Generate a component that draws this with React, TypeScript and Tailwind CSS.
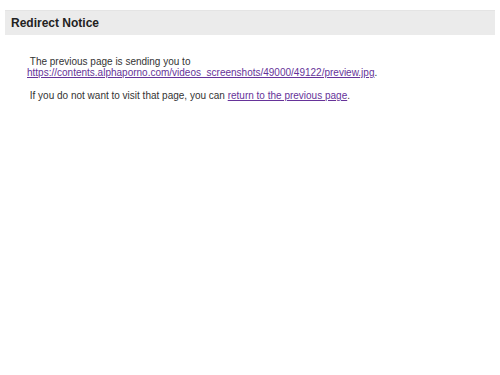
export default function App() {
  return (
    <div className="min-h-[375px] bg-white pt-[10px] px-[5px] text-[10px] text-[#333]" style={{ fontFamily: '"Liberation Sans", Arial, sans-serif' }}>
      <div className="h-[25px] bg-[#ebebeb] border-t border-[#e4e4e4] flex items-center pl-[6px]">
        <span className="font-bold text-[12px] text-[#222]">Redirect Notice</span>
      </div>
      <div className="pl-[22px] pt-[21px]">
        <div className="leading-[11px]">
          &nbsp;The previous page is sending you to <br />
          <a href="#" className="text-[#663399] underline">https://contents.alphaporno.com/videos_screenshots/49000/49122/preview.jpg</a>.
        </div>
        <div className="mt-[12px] leading-[11px]">
          &nbsp;If you do not want to visit that page, you can <a href="#" className="text-[#663399] underline">return to the previous page</a>.
        </div>
      </div>
    </div>
  );
}
